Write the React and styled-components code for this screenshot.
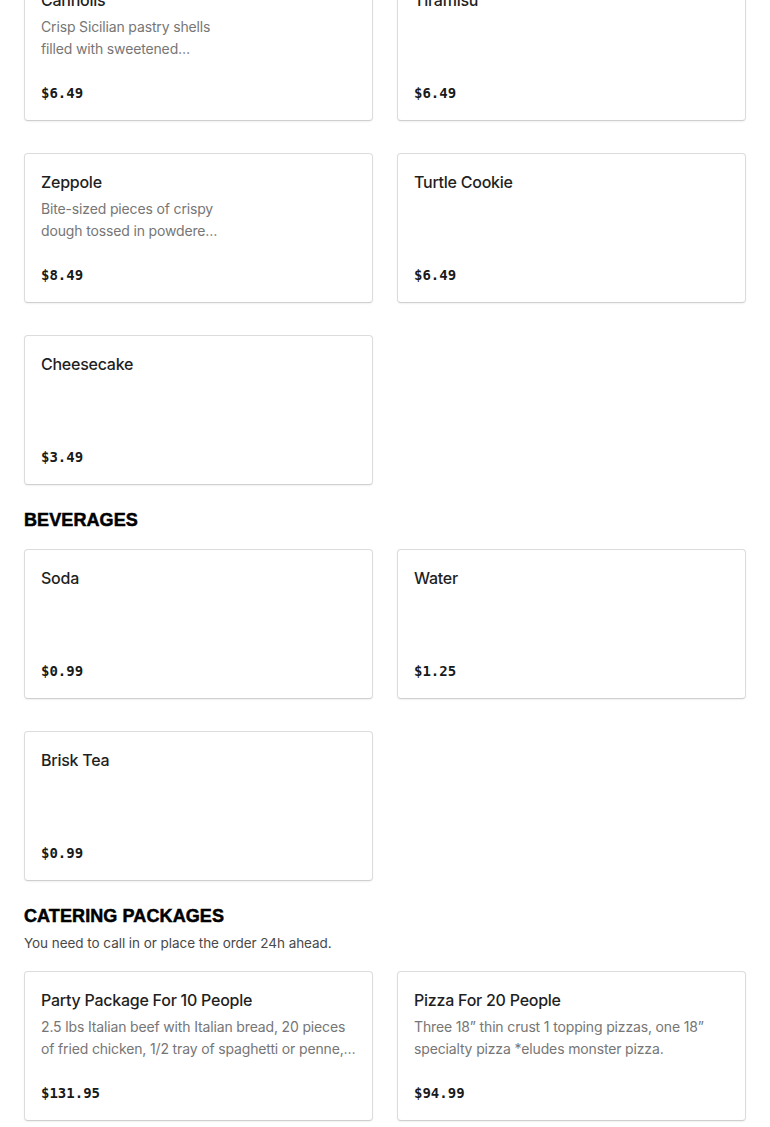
import React from "react";
import styled, { createGlobalStyle } from "styled-components";

const GlobalStyle = createGlobalStyle`
  html, body {
    margin: 0;
    padding: 0;
    background: #fff;
    overflow: hidden;
  }
  body {
    font-family: Inter, "Noto Sans", sans-serif;
    color: #191919;
  }
`;

const Page = styled.div`
  width: 770px;
  box-sizing: border-box;
  padding: 0 24px;
  margin-top: -29px;
`;

const Section = styled.section`
  margin-bottom: 24px;
`;

const Heading = styled.h2`
  margin: 0;
  font-family: "Liberation Sans", Arial, sans-serif;
  font-size: 18px;
  line-height: 22px;
  font-weight: 700;
  letter-spacing: 0.1px;
  -webkit-text-stroke: 0.5px #000;
  color: #000;
  text-transform: uppercase;
`;

const Note = styled.p`
  margin: 6px 0 0;
  font-size: 13.5px;
  line-height: 20px;
  color: #494949;
  letter-spacing: -0.05px;
`;

const Grid = styled.div`
  display: grid;
  grid-template-columns: 1fr 1fr;
  column-gap: 24px;
  row-gap: 32px;
  margin-top: ${(p) => (p.$flush ? "0" : "18px")};
`;

const Card = styled.div`
  box-sizing: border-box;
  height: 150px;
  padding: 16px 16px 15px;
  border: 1px solid #dcdcdc;
  border-bottom-color: #cfcfcf;
  border-radius: 4px;
  box-shadow: 0 1px 2px rgba(0, 0, 0, 0.06);
  display: flex;
  flex-direction: column;
  background: #fff;
`;

const Title = styled.div`
  font-size: 16px;
  line-height: 24px;
  font-weight: 500;
  color: #1f1f1f;
  letter-spacing: -0.25px;
`;

const Desc = styled.div`
  margin-top: 4px;
  font-size: 14px;
  line-height: 22px;
  color: #767676;
  letter-spacing: -0.15px;
  max-width: ${(p) => (p.$narrow ? "180px" : "none")};
  display: -webkit-box;
  -webkit-line-clamp: 2;
  -webkit-box-orient: vertical;
  overflow: hidden;
`;

const Price = styled.div`
  margin-top: auto;
  font-family: "DejaVu Sans Mono", "Liberation Mono", monospace;
  font-size: 14px;
  line-height: 24px;
  font-weight: 700;
  color: #191919;
`;

const sections = [
  {
    name: null,
    items: [
      { title: "Cannolis", desc: "Crisp Sicilian pastry shells filled with sweetened ricotta cream and chocolate chips", price: "$6.49", narrow: true },
      { title: "Tiramisu", price: "$6.49" },
      { title: "Zeppole", desc: "Bite-sized pieces of crispy dough tossed in powdered sugar", price: "$8.49", narrow: true },
      { title: "Turtle Cookie", price: "$6.49" },
      { title: "Cheesecake", price: "$3.49" },
    ],
  },
  {
    name: "Beverages",
    items: [
      { title: "Soda", price: "$0.99" },
      { title: "Water", price: "$1.25" },
      { title: "Brisk Tea", price: "$0.99" },
    ],
  },
  {
    name: "Catering Packages",
    note: "You need to call in or place the order 24h ahead.",
    items: [
      {
        title: "Party Package For 10 People",
        desc: "2.5 lbs Italian beef with Italian bread, 20 pieces of fried chicken, 1/2 tray of spaghetti or penne, salad and garlic bread",
        price: "$131.95",
      },
      {
        title: "Pizza For 20 People",
        desc: "Three 18\u201D thin crust 1 topping pizzas, one 18\u201D specialty pizza *eludes monster pizza.",
        price: "$94.99",
      },
    ],
  },
];

function MenuCard({ title, desc, price, narrow }) {
  return (
    <Card>
      <Title>{title}</Title>
      {desc && <Desc $narrow={narrow}>{desc}</Desc>}
      <Price>{price}</Price>
    </Card>
  );
}

export default function App() {
  return (
    <>
      <GlobalStyle />
      <Page>
        {sections.map((s, i) => (
          <Section key={i}>
            {s.name && <Heading>{s.name}</Heading>}
            {s.note && <Note>{s.note}</Note>}
            <Grid $flush={!s.name}>
              {s.items.map((item) => (
                <MenuCard key={item.title} {...item} />
              ))}
            </Grid>
          </Section>
        ))}
      </Page>
    </>
  );
}
